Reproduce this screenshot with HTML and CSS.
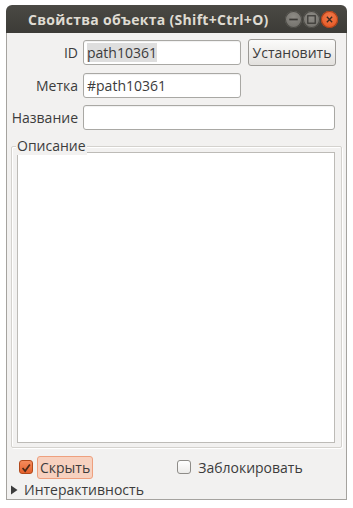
FILE: index.html
```html
<!DOCTYPE html>
<html>
<head>
<meta charset="utf-8">
<link rel="stylesheet" href="styles.css">
</head>
<body>
<div class="win">
  <div class="titlebar">
    <span class="title">Свойства объекта (Shift+Ctrl+O)</span>
    <div class="wbtns">
      <span class="wb grey"><svg width="17" height="17" viewBox="0 0 16 16"><rect x="4" y="7.2" width="8" height="1.6" fill="#3c3b37"/></svg></span>
      <span class="wb grey"><svg width="17" height="17" viewBox="0 0 16 16"><rect x="4.5" y="4.5" width="7" height="7" fill="none" stroke="#3c3b37" stroke-width="1.2"/></svg></span>
      <span class="wb close"><svg width="17" height="17" viewBox="0 0 16 16"><path d="M5.5 5.5 L10.5 10.5 M10.5 5.5 L5.5 10.5" stroke="#3c2a20" stroke-width="1.3"/></svg></span>
    </div>
  </div>
  <div class="content">
    <div class="form">
      <label class="lbl">ID</label>
      <div class="entry short"><span class="sel">path10361</span></div>
      <button class="btn">Установить</button>
      <label class="lbl">Метка</label>
      <div class="entry short">#path10361</div>
      <span></span>
      <label class="lbl">Название</label>
      <div class="entry wide"></div>
    </div>
    <div class="frame">
      <span class="legend">Описание</span>
      <div class="textarea"></div>
    </div>
    <div class="checks">
      <div class="chk">
        <span class="box on"><svg width="14" height="14" viewBox="0 0 14 14"><path d="M3 7 L6 10.5 L11.5 3" fill="none" stroke="#4a2a1a" stroke-width="2"/></svg></span>
        <span class="chklbl focus">Скрыть</span>
      </div>
      <div class="chk">
        <span class="box"></span>
        <span class="chklbl">Заблокировать</span>
      </div>
    </div>
    <div class="expander">
      <svg width="8" height="10" viewBox="0 0 8 10"><path d="M1 0.5 L7.5 5 L1 9.5 Z" fill="#3c3c3c"/></svg>
      <span>Интерактивность</span>
    </div>
  </div>
</div>
</body>
</html>
```
FILE: styles.css
```css
html, body {
  margin: 0;
  padding: 0;
  background: #ffffff;
}
body {
  font-family: "Open Sans", "DejaVu Sans", sans-serif;
  font-size: 14px;
  color: #3c3c3c;
}
.win {
  margin: 5px 0 0 6px;
  width: 341px;
  height: 495px;
  box-sizing: border-box;
  display: flex;
  flex-direction: column;
}
.titlebar {
  height: 28px;
  background: linear-gradient(#4a4944, #3c3b37);
  border-radius: 6px 6px 0 0;
  display: flex;
  align-items: center;
  padding: 0 9px 0 22px;
}
.title {
  color: #dfdbd2;
  font-weight: bold;
  font-size: 14px;
  flex: 1;
  white-space: nowrap;
  letter-spacing: 0.3px;
}
.wbtns {
  display: flex;
  gap: 1px;
  margin-top: 1px;
}
.wb {
  width: 17px;
  height: 17px;
  border-radius: 50%;
  display: flex;
}
.wb.grey {
  background: radial-gradient(circle at 50% 35%, #8e8c86, #6b6964);
  box-shadow: inset 0 0 0 1px #4a4944;
}
.wb.close {
  background: radial-gradient(circle at 50% 35%, #f47a4a, #e0501c);
  box-shadow: inset 0 0 0 1px #a8401a;
}
.content {
  flex: 1;
  background: #f2f1f0;
  border: 1px solid #a5a39f;
  border-top: none;
  display: flex;
  flex-direction: column;
  padding: 6px 9px 0 4px;
}
.form {
  display: grid;
  grid-template-columns: 67px 158px 90px;
  column-gap: 5px;
  row-gap: 7px;
  align-items: center;
}
.lbl {
  text-align: right;
  white-space: nowrap;
}
.entry {
  height: 25px;
  box-sizing: border-box;
  background: #fff;
  border: 1px solid #a9a8a4;
  border-radius: 3px;
  padding: 0 3px;
  display: flex;
  align-items: center;
  box-shadow: inset 0 1px 1px rgba(0,0,0,0.06);
}
.entry.wide {
  grid-column: 2 / 4;
  margin-right: 1px;
}
.sel {
  background: #dedede;
}
.btn {
  font: inherit;
  color: #3c3c3c;
  height: 27px;
  margin-left: 2px;
  border: 1px solid #9c9a96;
  border-radius: 3px;
  background: linear-gradient(#fbfbfa, #e3e1de);
  padding: 0;
}
.frame {
  margin: 16px -5px 0 0;
  height: 302px;
  border: 1px solid #d4d2ce;
  box-shadow: inset 1px 1px 0 #fff, 1px 1px 0 #fff;
  border-radius: 2px;
  position: relative;
  padding: 5px 6px 4px 5px;
  box-sizing: border-box;
  display: flex;
}
.legend {
  position: absolute;
  top: -10px;
  left: 4px;
  background: #f2f1f0;
  padding: 0 1px;
  line-height: 18px;
}
.textarea {
  flex: 1;
  background: #fff;
  border: 1px solid #bdbbb7;
}
.checks {
  display: flex;
  margin-top: 8px;
  padding-left: 8px;
  height: 22px;
  align-items: center;
}
.chk {
  display: flex;
  align-items: center;
  gap: 4px;
}
.chk + .chk {
  margin-left: 84px;
}
.box {
  width: 14px;
  height: 14px;
  box-sizing: border-box;
  border: 1px solid #8e8c88;
  border-radius: 3px;
  background: linear-gradient(#ffffff, #ecebe9);
  display: flex;
}
.box.on {
  background: linear-gradient(#f58b5c, #e5612c);
  border-color: #b24a1c;
}
.chklbl {
  padding: 1px 2px;
  border: 1px solid transparent;
  border-radius: 3px;
}
.chklbl.focus {
  background: #f7d1bf;
  border-color: #eea07e;
}
.expander {
  display: flex;
  align-items: center;
  gap: 6px;
  margin-top: 2px;
  margin-left: -1px;
}
```
